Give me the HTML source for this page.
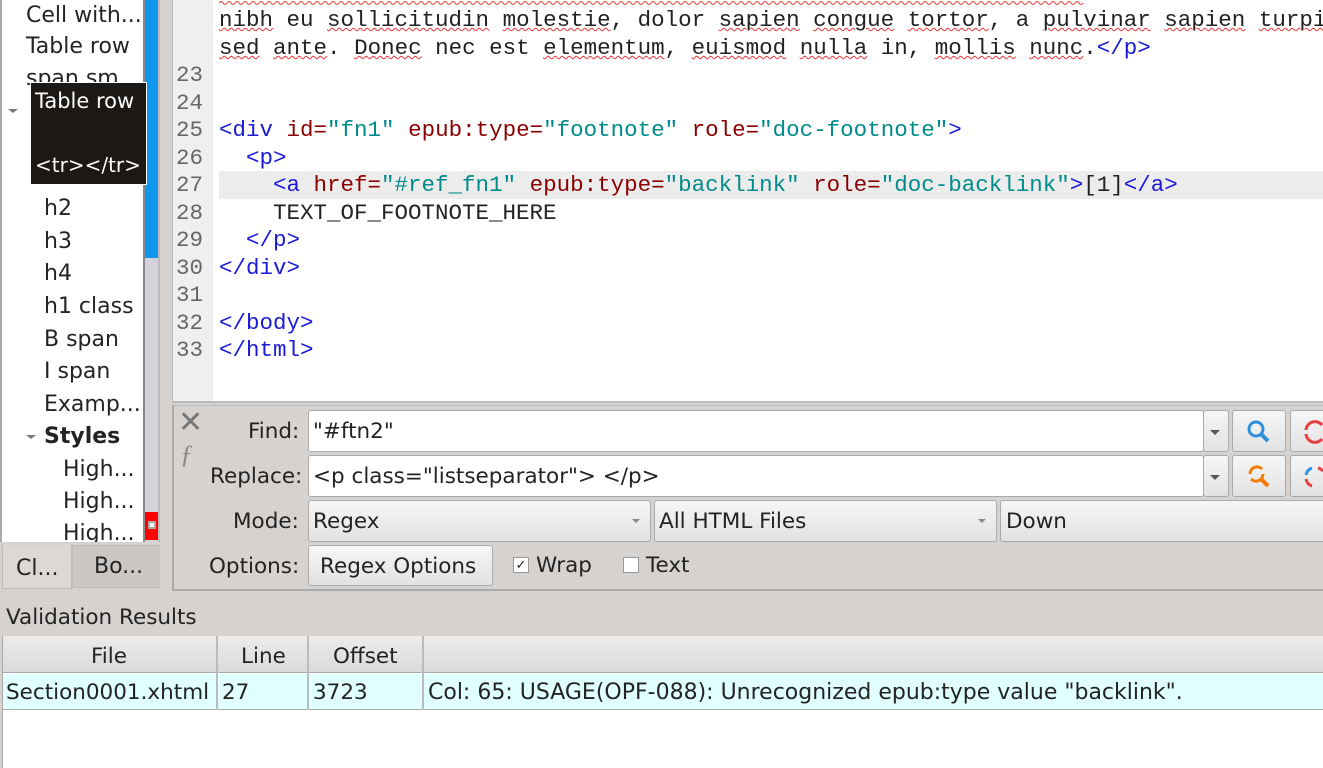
<!DOCTYPE html>
<html><head><meta charset="utf-8"><style>
*{margin:0;padding:0;box-sizing:border-box}
body{width:1323px;height:768px;overflow:hidden;background:#d6d2cf;font-family:"Liberation Sans","DejaVu Sans",sans-serif;position:relative;color:#232323}
.a{position:absolute;white-space:nowrap}
.t{font-family:"DejaVu Sans","Liberation Sans",sans-serif;font-size:22px;color:#232323}
.m{font-family:"Liberation Mono",monospace;font-size:22.5px;color:#222}
.ln{font-family:"Liberation Mono",monospace;font-size:22.5px;color:#666;left:176px;width:32px}
.b{color:#1a1ad8}.r{color:#8b0000}.g{color:#008b8b}
.sq{text-decoration:underline wavy #e33;text-decoration-thickness:1px}
.ui{font-family:"DejaVu Sans",sans-serif;font-size:21.5px;color:#232323}
.in{background:#fff;border:1px solid #aaa;border-radius:3px}
.btn{background:linear-gradient(#f6f6f6,#e2e2e2);border:1px solid #aaa;border-radius:3px}
</style></head><body>
<!-- left tree panel -->
<div class="a" style="left:0;top:0;width:145px;height:542px;background:#fff;border-left:2px solid #aaa"></div>
<div class="a t" style="left:26px;top:3px">Cell with...</div>
<div class="a t" style="left:26px;top:34px">Table row</div>
<div class="a t" style="left:26px;top:66px">span sm</div>
<div class="a" style="left:8px;top:109px;width:0;height:0;border-left:5px solid transparent;border-right:5px solid transparent;border-top:4px solid #777"></div>
<div class="a t" style="left:44px;top:196px">h2</div>
<div class="a t" style="left:44px;top:229px">h3</div>
<div class="a t" style="left:44px;top:261px">h4</div>
<div class="a t" style="left:44px;top:294px">h1 class</div>
<div class="a t" style="left:44px;top:327px">B span</div>
<div class="a t" style="left:44px;top:359px">I span</div>
<div class="a t" style="left:44px;top:392px">Examp...</div>
<div class="a" style="left:26px;top:435px;width:0;height:0;border-left:5px solid transparent;border-right:5px solid transparent;border-top:4px solid #777"></div>
<div class="a t" style="left:44px;top:424px;font-weight:bold">Styles</div>
<div class="a t" style="left:63px;top:457px">High...</div>
<div class="a t" style="left:63px;top:489px">High...</div>
<div class="a t" style="left:63px;top:521px;height:21px;overflow:hidden">High...</div>
<!-- scrollbar -->
<div class="a" style="left:143px;top:0;width:17px;height:542px;background:#d4d2dc;border-left:2px solid #888;border-right:2px solid #bbb"></div>
<div class="a" style="left:145px;top:0;width:13px;height:258px;background:#0e97eb"></div>
<div class="a" style="left:145px;top:512px;width:13px;height:28px;background:#f00"></div>
<div class="a" style="left:148px;top:521px;width:8px;height:8px;background:#fff;border:2px solid #aaa"></div>
<!-- tooltip -->
<div class="a" style="left:30px;top:82px;width:117px;height:103px;background:#1b1815;border:1px solid #fff"></div>
<div class="a t" style="left:35px;top:89px;color:#fff;font-size:21px">Table row</div>
<div class="a t" style="left:35px;top:153px;color:#fff;font-size:20px">&lt;tr&gt;&lt;/tr&gt;</div>
<!-- tabs -->
<div class="a" style="left:2px;top:545px;width:70px;height:44px;background:#dcd8d5;border:1px solid #bbb;border-top:none"></div>
<div class="a t" style="left:16px;top:556px">Cl...</div>
<div class="a" style="left:72px;top:545px;width:91px;height:43px;background:#cbc7c4;border:1px solid #bbb"></div>
<div class="a t" style="left:94px;top:554px">Bo...</div>
<!-- splitter -->
<div class="a" style="left:160px;top:0;width:12px;height:590px;background:#d6d2cf"></div>
<!-- editor -->
<div class="a" style="left:172px;top:0;width:1151px;height:403px;background:#fff;border-left:1px solid #bbb;border-bottom:2px solid #bbb"></div>
<div class="a" style="left:173px;top:0;width:40px;height:401px;background:#efefef"></div>
<div class="a" style="left:219px;top:171px;width:1104px;height:28px;background:#ececec"></div>
<svg class="a" style="left:219px;top:0" width="1104" height="6"><path d="M0 3 q2 -3 4 0 t4 0 t4 0 t4 0 t4 0 t4 0 t4 0 t4 0 t4 0 t4 0 t4 0 t4 0 t4 0 t4 0 t4 0 t4 0 t4 0 t4 0 t4 0 t4 0 t4 0 t4 0 t4 0 t4 0 t4 0 t4 0 t4 0 t4 0 t4 0 t4 0 t4 0 t4 0 t4 0 t4 0 t4 0 t4 0 t4 0 t4 0 t4 0 t4 0 t4 0 t4 0 t4 0 t4 0 t4 0 t4 0 t4 0 t4 0 t4 0 t4 0 t4 0 t4 0 t4 0 t4 0 t4 0 t4 0 t4 0 t4 0 t4 0 t4 0 t4 0 t4 0 t4 0 t4 0 t4 0 t4 0 t4 0 t4 0 t4 0 t4 0 t4 0 t4 0 t4 0 t4 0 t4 0 t4 0 t4 0 t4 0 t4 0 t4 0 t4 0 t4 0 t4 0 t4 0 t4 0 t4 0 t4 0 t4 0 t4 0 t4 0 t4 0 t4 0 t4 0 t4 0 t4 0 t4 0 t4 0 t4 0 t4 0 t4 0 t4 0 t4 0 t4 0 t4 0 t4 0 t4 0 t4 0 t4 0 t4 0 t4 0 t4 0 t4 0 t4 0 t4 0 t4 0 t4 0 t4 0 t4 0 t4 0 t4 0 t4 0 t4 0 t4 0 t4 0 t4 0 t4 0 t4 0 t4 0 t4 0 t4 0 t4 0 t4 0 t4 0 t4 0 t4 0 t4 0 t4 0 t4 0 t4 0 t4 0 t4 0 t4 0 t4 0 t4 0 t4 0 t4 0 t4 0 t4 0 t4 0 t4 0 t4 0 t4 0 t4 0 t4 0 t4 0 t4 0 t4 0 t4 0 t4 0 t4 0 t4 0 t4 0 t4 0 t4 0 t4 0 t4 0 t4 0 t4 0 t4 0 t4 0 t4 0 t4 0 t4 0 t4 0 t4 0 t4 0 t4 0 t4 0 t4 0 t4 0 t4 0 t4 0 t4 0 t4 0 t4 0 t4 0 t4 0 t4 0 t4 0 t4 0 t4 0 t4 0 t4 0 t4 0 t4 0 t4 0 t4 0 t4 0 t4 0 t4 0 t4 0 t4 0 t4 0 t4 0 t4 0 t4 0 t4 0 t4 0 t4 0 t4 0 t4 0 t4 0 t4 0 t4 0 t4 0 t4 0" fill="none" stroke="#e33" stroke-width="1"/></svg>
<div class="a m" style="left:219px;top:7px"><span class="sq">nibh</span> eu <span class="sq">sollicitudin</span> <span class="sq">molestie</span>, dolor <span class="sq">sapien</span> <span class="sq">congue</span> <span class="sq">tortor</span>, a <span class="sq">pulvinar</span> <span class="sq">sapien</span> <span class="sq">turpis</span></div>
<div class="a m" style="left:219px;top:35px"><span class="sq">sed</span> <span class="sq">ante</span>. <span class="sq">Donec</span> nec est <span class="sq">elementum</span>, <span class="sq">euismod</span> <span class="sq">nulla</span> in, <span class="sq">mollis</span> <span class="sq">nunc</span>.<span class="b">&lt;/p&gt;</span></div>
<div class="a ln" style="top:62px">23</div>
<div class="a ln" style="top:90px">24</div>
<div class="a ln" style="top:117px">25</div>
<div class="a ln" style="top:145px">26</div>
<div class="a ln" style="top:172px">27</div>
<div class="a ln" style="top:200px">28</div>
<div class="a ln" style="top:227px">29</div>
<div class="a ln" style="top:255px">30</div>
<div class="a ln" style="top:282px">31</div>
<div class="a ln" style="top:310px">32</div>
<div class="a ln" style="top:337px">33</div>
<div class="a m" style="left:219px;top:117px"><span class="b">&lt;div</span> <span class="r">id=</span><span class="g">"fn1"</span> <span class="r">epub:type=</span><span class="g">"footnote"</span> <span class="r">role=</span><span class="g">"doc-footnote"</span><span class="b">&gt;</span></div>
<div class="a m b" style="left:246px;top:145px">&lt;p&gt;</div>
<div class="a m" style="left:273px;top:172px"><span class="b">&lt;a</span> <span class="r">href=</span><span class="g">"#ref_fn1"</span> <span class="r">epub:type=</span><span class="g">"backlink"</span> <span class="r">role=</span><span class="g">"doc-backlink"</span><span class="b">&gt;</span>[1]<span class="b">&lt;/a&gt;</span></div>
<div class="a m" style="left:273px;top:200px">TEXT_OF_FOOTNOTE_HERE</div>
<div class="a m b" style="left:246px;top:227px">&lt;/p&gt;</div>
<div class="a m b" style="left:219px;top:255px">&lt;/div&gt;</div>
<div class="a m b" style="left:219px;top:310px">&lt;/body&gt;</div>
<div class="a m b" style="left:219px;top:337px">&lt;/html&gt;</div>
<!-- find panel -->
<div class="a" style="left:172px;top:405px;width:1151px;height:186px;border-left:2px solid #aaa;border-top:1px solid #bbb;border-bottom:2px solid #aaa"></div>
<div class="a" style="left:178px;top:410px;font-size:30px;color:#777;font-weight:bold;line-height:26px">✕</div>
<div class="a" style="left:180px;top:440px;font-size:26px;color:#888;font-style:italic;font-family:'Liberation Serif',serif">ƒ</div>
<div class="a ui" style="left:248px;top:419px">Find:</div>
<div class="a ui" style="left:210px;top:464px">Replace:</div>
<div class="a ui" style="left:233px;top:509px">Mode:</div>
<div class="a ui" style="left:209px;top:554px">Options:</div>
<div class="a in" style="left:308px;top:410px;width:896px;height:42px"></div>
<div class="a ui" style="left:313px;top:419px">"#ftn2"</div>
<div class="a btn" style="left:1203px;top:410px;width:26px;height:42px"></div>
<div class="a in" style="left:308px;top:455px;width:896px;height:42px"></div>
<div class="a ui" style="left:313px;top:464px">&lt;p class="listseparator"&gt; &lt;/p&gt;</div>
<div class="a btn" style="left:1203px;top:455px;width:26px;height:42px"></div>
<div class="a" style="left:1210px;top:430px;border-left:5px solid transparent;border-right:5px solid transparent;border-top:5px solid #555"></div>
<div class="a" style="left:1210px;top:475px;border-left:5px solid transparent;border-right:5px solid transparent;border-top:5px solid #555"></div>
<div class="a btn" style="left:1232px;top:410px;width:54px;height:42px"></div>
<div class="a btn" style="left:1290px;top:410px;width:40px;height:42px"></div>
<div class="a btn" style="left:1232px;top:455px;width:54px;height:42px"></div>
<div class="a btn" style="left:1290px;top:455px;width:40px;height:42px"></div>
<svg class="a" style="left:1245px;top:418px" width="28" height="28"><circle cx="11" cy="11" r="7" fill="none" stroke="#2f8fdc" stroke-width="3"/><path d="M16 16l7 7" stroke="#2f8fdc" stroke-width="4"/></svg>
<svg class="a" style="left:1245px;top:463px" width="28" height="28"><path d="M5 11a7 7 0 0 1 12-5M18 11a7 7 0 0 1-12 5" fill="none" stroke="#f57900" stroke-width="3"/><path d="M16 16l7 7" stroke="#f57900" stroke-width="4"/></svg>
<svg class="a" style="left:1302px;top:418px" width="21" height="28"><path d="M4 12a9 9 0 0 1 16-5M4 16a9 9 0 0 0 16 5" fill="none" stroke="#e64040" stroke-width="3"/></svg>
<svg class="a" style="left:1302px;top:463px" width="21" height="28"><path d="M4 12a9 9 0 0 1 6-7" fill="none" stroke="#2f8fdc" stroke-width="3"/><path d="M4 16a9 9 0 0 0 6 7M16 5a9 9 0 0 1 5 3" fill="none" stroke="#e64040" stroke-width="3"/></svg>
<div class="a btn" style="left:308px;top:500px;width:343px;height:42px"></div>
<div class="a ui" style="left:313px;top:509px">Regex</div>
<div class="a" style="left:632px;top:519px;border-left:4px solid transparent;border-right:4px solid transparent;border-top:4px solid #888"></div>
<div class="a btn" style="left:654px;top:500px;width:343px;height:42px"></div>
<div class="a ui" style="left:659px;top:509px">All HTML Files</div>
<div class="a" style="left:978px;top:519px;border-left:4px solid transparent;border-right:4px solid transparent;border-top:4px solid #888"></div>
<div class="a btn" style="left:1000px;top:500px;width:340px;height:42px"></div>
<div class="a ui" style="left:1006px;top:509px">Down</div>
<div class="a btn" style="left:308px;top:545px;width:185px;height:41px"></div>
<div class="a ui" style="left:320px;top:554px">Regex Options</div>
<div class="a" style="left:513px;top:557px;width:16px;height:16px;background:#fff;border:1px solid #999;font-size:13px;line-height:14px;text-align:center">✓</div>
<div class="a ui" style="left:536px;top:553px">Wrap</div>
<div class="a" style="left:623px;top:557px;width:16px;height:16px;background:#fff;border:1px solid #999"></div>
<div class="a ui" style="left:646px;top:553px">Text</div>
<!-- validation -->
<div class="a ui" style="left:6px;top:605px">Validation Results</div>
<div class="a" style="left:2px;top:636px;width:1321px;height:132px;background:#fff;border-left:1px solid #aaa"></div>
<div class="a" style="left:3px;top:636px;width:1320px;height:37px;background:linear-gradient(#eeeceb,#dcdad8);border-bottom:1px solid #aaa"></div>
<div class="a" style="left:216px;top:636px;width:2px;height:74px;background:#bbb"></div>
<div class="a" style="left:307px;top:636px;width:2px;height:74px;background:#bbb"></div>
<div class="a" style="left:422px;top:636px;width:2px;height:74px;background:#bbb"></div>
<div class="a ui" style="left:91px;top:644px">File</div>
<div class="a ui" style="left:241px;top:644px">Line</div>
<div class="a ui" style="left:333px;top:644px">Offset</div>
<div class="a" style="left:3px;top:674px;width:1320px;height:36px;background:#e0ffff;border-bottom:1px solid #aaa"></div>
<div class="a" style="left:216px;top:674px;width:2px;height:36px;background:#bbb"></div>
<div class="a" style="left:307px;top:674px;width:2px;height:36px;background:#bbb"></div>
<div class="a" style="left:422px;top:674px;width:2px;height:36px;background:#bbb"></div>
<div class="a ui" style="left:6px;top:680px">Section0001.xhtml</div>
<div class="a ui" style="left:222px;top:680px">27</div>
<div class="a ui" style="left:313px;top:680px">3723</div>
<div class="a ui" style="left:428px;top:680px;font-size:22px">Col: 65: USAGE(OPF-088): Unrecognized epub:type value "backlink".</div>
</body></html>
